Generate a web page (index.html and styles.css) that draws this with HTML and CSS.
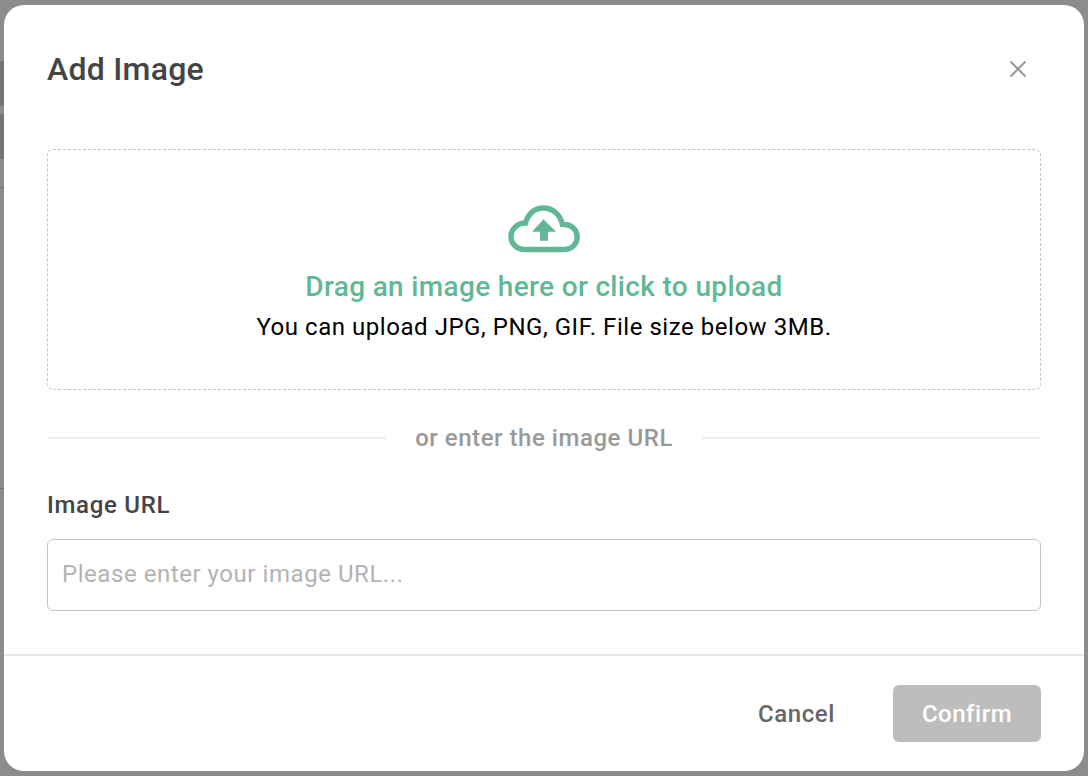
FILE: index.html
```html
<!DOCTYPE html>
<html lang="en">
<head>
    <meta charset="UTF-8">
    <meta name="viewport" content="width=device-width, initial-scale=1.0">
    <title>Add Image</title>
    <link rel="stylesheet" href="styles.css">
</head>
<body>
    <div class="backdrop">
        <span class="shade shade-a"></span>
        <span class="shade shade-b"></span>
        <span class="shade shade-c"></span>
        <span class="shade shade-d"></span>
    </div>
    <div class="modal">
        <div class="modal-header">
            <h2 class="modal-title">Add Image</h2>
            <button class="close-btn" aria-label="Close">
                <svg width="18" height="18" viewBox="0 0 18 18">
                    <path d="M1.5 1.5 L16.5 16.5 M16.5 1.5 L1.5 16.5" stroke="#999" stroke-width="2" fill="none"/>
                </svg>
            </button>
        </div>
        <div class="modal-body">
            <div class="dropzone">
                <svg class="cloud" width="74" height="48" viewBox="0 0 74 48">
                    <path d="M17 44.5 H57.5 C64.5 44.5 70.2 39 70.2 32 C70.2 25 64.5 19.5 57.5 19.5 H55.5 C53 9.5 46 3 36.5 3 C28 3 21 8.5 18.5 18 C10 18 4 24.5 4 31.5 C4 39 10 44.5 17 44.5 Z" fill="none" stroke="#62b895" stroke-width="5.5"/>
                    <path d="M36.5 14.3 L49 26.7 H41 V35.7 H33 V26.7 H25 Z" fill="#62b895"/>
                </svg>
                <div class="drop-title">Drag an image here or click to upload</div>
                <div class="drop-hint">You can upload JPG, PNG, GIF. File size below 3MB.</div>
            </div>
            <div class="divider">
                <span class="divider-line"></span>
                <span class="divider-text">or enter the image URL</span>
                <span class="divider-line"></span>
            </div>
            <label class="field-label" for="imageUrl">Image URL</label>
            <input class="field-input" id="imageUrl" type="text" placeholder="Please enter your image URL...">
        </div>
        <div class="modal-footer">
            <button class="btn-cancel">Cancel</button>
            <button class="btn-confirm">Confirm</button>
        </div>
    </div>
</body>
</html>
```

FILE: styles.css
```css
* {
    margin: 0;
    padding: 0;
    box-sizing: border-box;
}

body {
    font-family: Roboto, "Liberation Sans", sans-serif;
    background-color: #8c8c8c;
    height: 776px;
    overflow: hidden;
    padding: 5px 4px;
}

.backdrop {
    position: absolute;
    top: 0;
    left: 0;
    width: 100%;
    height: 100%;
}

.shade {
    position: absolute;
    left: 0;
    width: 4px;
    background-color: #747474;
}

.shade-a { top: 61px; height: 45px; }
.shade-b { top: 114px; height: 45px; }
.shade-c { top: 187px; height: 1px; }
.shade-d { top: 488px; height: 1px; }

.modal {
    position: relative;
    width: 1080px;
    height: 766px;
    background-color: #fff;
    border-radius: 20px;
    display: flex;
    flex-direction: column;
}

.modal-header {
    display: flex;
    justify-content: space-between;
    align-items: flex-start;
    padding: 44px 57.5px 0 43px;
    height: 144px;
}

.modal-title {
    font-size: 32px;
    line-height: 40px;
    font-weight: 500;
    letter-spacing: 0.25px;
    color: #444;
}

.close-btn {
    border: none;
    background: none;
    display: flex;
    margin-top: 11px;
}

.modal-body {
    padding: 0 43px;
    height: 505px;
}

.dropzone {
    height: 241px;
    border: 1px dashed #c4c4c4;
    border-radius: 6px;
    display: flex;
    flex-direction: column;
    align-items: center;
    padding-top: 55px;
}

.drop-title {
    font-size: 28px;
    line-height: 34px;
    font-weight: 500;
    letter-spacing: 0.34px;
    color: #62b895;
    margin-top: 17px;
}

.drop-hint {
    font-size: 24px;
    line-height: 32px;
    letter-spacing: 0.54px;
    color: #000;
    margin-top: 7px;
}

.divider {
    display: flex;
    align-items: center;
    gap: 29px;
    margin-top: 35px;
    height: 26px;
}

.divider-line {
    flex: 1;
    height: 2px;
    background-color: #eee;
}

.divider-text {
    font-size: 24px;
    font-weight: 500;
    letter-spacing: 0.54px;
    color: #999;
}

.field-label {
    display: block;
    font-size: 24px;
    line-height: 30px;
    font-weight: 500;
    letter-spacing: 0.7px;
    color: #444;
    margin-top: 39px;
}

.field-input {
    display: block;
    width: 100%;
    height: 72px;
    margin-top: 19px;
    padding: 0 14px 2px;
    border: 1px solid #c4c4c4;
    border-radius: 6px;
    font-family: inherit;
    font-size: 24px;
    letter-spacing: 0.55px;
    outline: none;
}

.field-input::placeholder {
    color: #b3b3b3;
}

.modal-footer {
    flex: 1;
    border-top: 2px solid #e6e6e6;
    display: flex;
    justify-content: flex-end;
    align-items: flex-start;
    gap: 58px;
    padding: 29px 43px 0 0;
}

.btn-cancel {
    height: 57px;
    border: none;
    background: none;
    font-family: inherit;
    font-size: 24px;
    font-weight: 500;
    letter-spacing: 0.6px;
    color: #666;
}

.btn-confirm {
    width: 148px;
    height: 57px;
    border: none;
    border-radius: 6px;
    background-color: #bdbdbd;
    color: #fff;
    font-family: inherit;
    font-size: 24px;
    font-weight: 500;
    letter-spacing: 0.5px;
}
```
